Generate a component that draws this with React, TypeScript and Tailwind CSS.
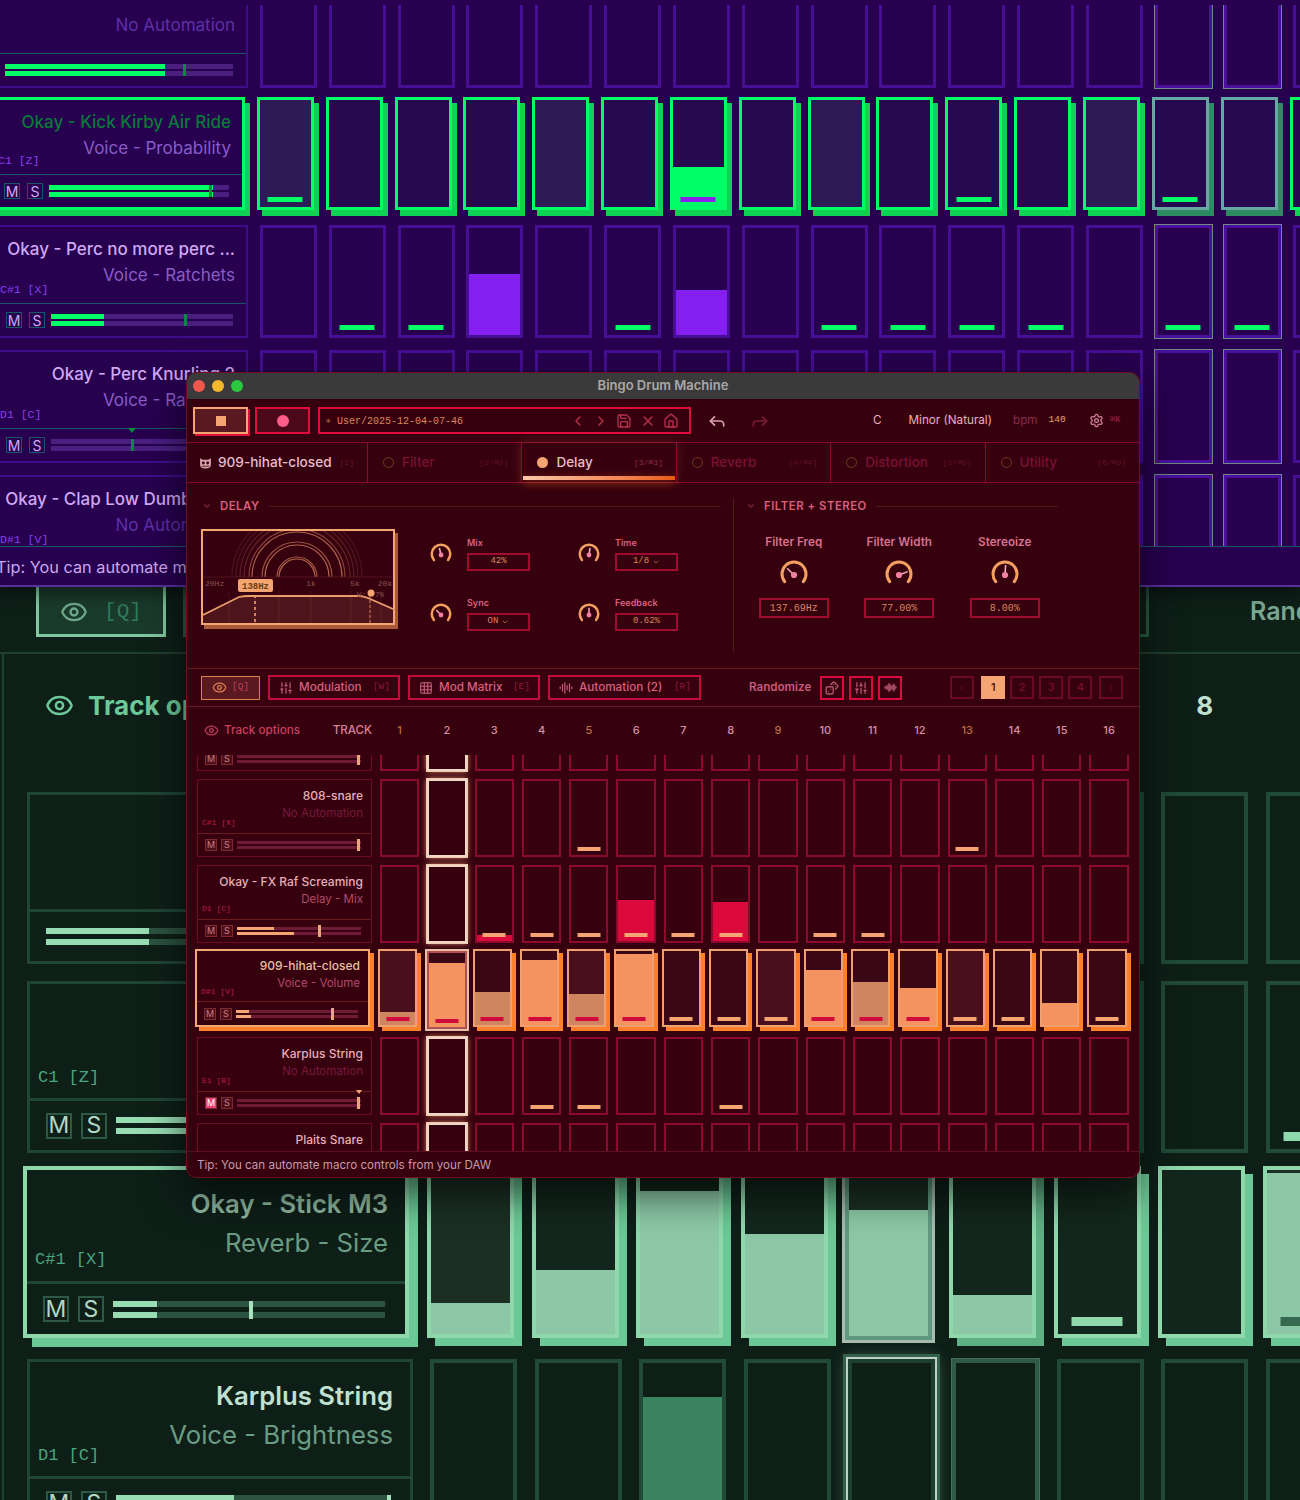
import {
  AudioLines,
  ChevronDown,
  ChevronLeft,
  ChevronRight,
  Dices,
  Eye,
  Forward,
  Grid3x3,
  House,
  Reply,
  Save,
  Settings,
  SlidersVertical,
  X,
} from "lucide-react"
import type { ReactNode } from "react"

const INTER = "font-['Inter',sans-serif]"
const MONO = "font-['Liberation_Mono',monospace]"

type Step = { bar?: boolean; fill?: number; dim?: boolean }
type Row = {
  name?: string
  sub: string
  subOff?: boolean
  keyLabel?: string
  on?: boolean
  noButtons?: boolean
  muted?: boolean
  a?: number
  b?: number
  handle?: number
  pin?: boolean
  steps: Record<number, Step>
}

const purple = {
  grid: "grid grid-cols-[260px_repeat(16,57px)] auto-rows-[113px] gap-x-[11.85px] gap-y-[12px]",
  panel: "border-2 border-[#3d0d8a]",
  panelOn: "border-[3px] border-[#00ff66] -translate-x-[3px] -translate-y-[3px] shadow-[5px_6px_0_#0fd154]",
  head: "h-[77px] pt-[12px] pl-[10px] pr-[11px] border-b border-[#1c5566]",
  headOn: "h-[75px] pt-[12px] pl-[10px] pr-[11px] border-b border-[#1c5566]",
  name: "text-[17px] leading-[20px] font-medium",
  nameCol: "text-[#d0a8f4]",
  nameOnCol: "text-[#0a7a3a]",
  sub: "text-[17px] leading-[20px] mt-[6px]",
  subCol: "text-[#8a5cc8]",
  subOffCol: "text-[#5f2fa8]",
  key: `${MONO} text-[11.5px] leading-[14px] -mt-[2px] text-[#8a3ff0]`,
  keyOn: `${MONO} text-[11.5px] leading-[14px] -mt-[4px] text-[#8a3ff0]`,
  foot: "pl-[16px] pr-[13px] gap-[7px]",
  btn: "w-[16px] h-[16px] border border-[#1c5566] text-[14px]",
  btnCol: "text-[#d0a8f4]",
  btnOn: "bg-[#f0407a] text-white",
  track: "h-[5px] bg-[#4a1f80]",
  tracks: "gap-[2px] ml-[-1px]",
  trackFill: "bg-[#00ff66]",
  handle: "w-[3px] h-[12px] top-0 bg-[#0a8a3e]",
  pin: "border-x-[4px] border-t-[5px] border-x-transparent border-t-[#0a8a3e] -top-[11px] -ml-[3px]",
  step: "border-[3px] border-[#460f96]",
  stepOn: "border-[3px] border-[#00ff66] -translate-x-[3px] -translate-y-[3px] shadow-[5px_6px_0_#0fd154]",
  play: "border-[3px] border-[#4a0f9e] shadow-[0_0_0_1px_#6f8a86]",
  playOn: "border-[3px] border-[#66a8a4] -translate-x-[3px] -translate-y-[3px] shadow-[5px_6px_0_#2f8a62]",
  ghost: "border-[3px] border-[#460f96]",
  ghostOn: "border-[3px] border-[#00ff66]",
  beat: "bg-[#2e1a54]",
  rest: "bg-[#27094f]",
  fill: "bg-[#851ff0]",
  fillOn: "bg-[#00ff66]",
  fillDim: "bg-[#00ff66]",
  bar: "w-[35px] h-[5px] bottom-[5px]",
  barCol: "bg-[#00ff66]",
  barOnFill: "bg-[#8a1ff0]",
  playCols: [13, 14],
  ghostCols: [] as number[],
}

const green = {
  grid: "grid grid-cols-[386px_repeat(16,87px)] auto-rows-[172px] gap-x-[17.4px] gap-y-[17px]",
  panel: "border-[3px] border-[#1f4535]",
  panelOn: "border-[4px] border-[#8ed8ac] -translate-x-[4px] -translate-y-[4px] shadow-[9px_9px_0_#6cc896]",
  head: "h-[117px] pt-[20px] pl-[8px] pr-[17px] border-b-[3px] border-[#1f4535]",
  headOn: "h-[114px] pt-[20px] pl-[8px] pr-[17px] border-b-[3px] border-[#1f4535]",
  name: "text-[25.7px] leading-[28px] font-semibold",
  nameCol: "text-[#c0e0d0]",
  nameOnCol: "text-[#8fb8a0]",
  sub: "text-[25.7px] leading-[28px] mt-[11px]",
  subCol: "text-[#6a9c84]",
  subOffCol: "text-[#356a50]",
  key: `${MONO} text-[17px] leading-[20px] -mt-[3px] text-[#4aa680]`,
  keyOn: `${MONO} text-[17px] leading-[20px] -mt-[7px] text-[#4aa680]`,
  foot: "pl-[16px] pr-[20px] gap-[9px]",
  btn: "w-[26px] h-[26px] border-2 border-[#2c5a46] text-[23px]",
  btnCol: "text-[#b0d8c4]",
  btnOn: "bg-[#f0407a] text-white",
  track: "h-[6px] bg-[#2c5240]",
  tracks: "gap-[5px]",
  trackFill: "bg-[#98dcb4]",
  handle: "w-[4px] h-[18px] top-0 bg-[#a8e0c0]",
  pin: "border-x-[5px] border-t-[6px] border-x-transparent border-t-[#a8e0c0] -top-[10px] -ml-[3px]",
  step: "border-[4px] border-[#214a38]",
  stepOn: "border-[4px] border-[#8ed8ac] -translate-x-[3px] -translate-y-[4px] shadow-[8px_8px_0_#6cc896]",
  play: "border-[4px] border-[#1d3f30] shadow-[0_0_0_2px_#c0d0c8,0_0_0_5px_#34604e,0_0_14px_#5a7a68]",
  playOn: "border-[4px] border-[#5f9a80] -translate-x-[3px] -translate-y-[2px] shadow-[0_0_0_3px_#a8bcb0]",
  ghost: "border-[4px] border-[#2f5a48] shadow-[0_0_0_1px_#46705e]",
  ghostOn: "border-[4px] border-[#8ed8ac] -translate-x-[3px] -translate-y-[4px] shadow-[8px_8px_0_#5faf85]",
  beat: "bg-[#1b2f25]",
  rest: "bg-[#13261d]",
  fill: "bg-[#3a8560]",
  fillOn: "bg-[#8cc8a6]",
  fillDim: "bg-[#84bc9d]",
  bar: "w-[51px] h-[9px] bottom-[8px]",
  barCol: "bg-[#8ed8ac]",
  barOnFill: "bg-[#356a50]",
  playCols: [4],
  ghostCols: [5],
}

const red = {
  grid: "grid grid-cols-[175px_repeat(16,39.3px)] auto-rows-[78px] gap-x-[8px] gap-y-[8px]",
  panel: "border border-[#6e0a28]",
  panelOn: "border-2 border-[#f4a572] -translate-x-[2px] -translate-y-[2px] shadow-[4px_4px_0_#ff7f2a]",
  head: "h-[54px] pt-[8px] pl-[4px] pr-[8px] border-b border-[#6a1a20]",
  headOn: "h-[51px] pt-[7px] pl-[4px] pr-[8px] border-b border-[#6a1a20]",
  name: "text-[12px] leading-[16px] font-medium",
  nameCol: "text-[#e8aeb8]",
  nameOnCol: "text-[#e8c0a0]",
  sub: "text-[11.5px] leading-[14px] mt-[2px]",
  subCol: "text-[#b04a6c]",
  subOffCol: "text-[#761a3c]",
  key: `${MONO} text-[8px] leading-[8px] -mt-[1px] text-[#b81e4a]`,
  keyOn: `${MONO} text-[8px] leading-[8px] -mt-[2px] text-[#b81e4a]`,
  foot: "pl-[7px] pr-[10px] gap-[4px]",
  btn: "w-[12px] h-[12px] border border-[#7a2a30] text-[9px]",
  btnCol: "bg-[#4e1018] text-[#c87a8a]",
  btnOn: "bg-[#f0407a] text-white",
  track: "h-[3px] bg-[#701a38]",
  tracks: "gap-[2px]",
  trackFill: "bg-[#f4a572]",
  handle: "w-[3px] h-[12px] -top-[2px] bg-[#e8a878]",
  pin: "border-x-[3px] border-t-[4px] border-x-transparent border-t-[#f4a572] -top-[7px] -ml-[1.5px]",
  step: "border-2 border-[#8c0a2e]",
  stepOn: "border-2 border-[#f0a070] -translate-x-[2px] -translate-y-[2px] shadow-[4px_4px_0_#ff7f2a]",
  play: "border-2 border-[#f0d8c8] shadow-[0_0_0_1px_#f0c8b0,0_0_6px_#f0a070]",
  playOn: "border-2 border-[#b05050] shadow-[0_0_0_2px_#e8c0a8]",
  ghost: "border-2 border-[#8c0a2e]",
  ghostOn: "border-2 border-[#f0a070]",
  beat: "bg-[#4a0f1c]",
  rest: "bg-[#3a0714]",
  fill: "bg-[#dc0a3c]",
  fillOn: "bg-[#f4935f]",
  fillDim: "bg-[#cf8560]",
  bar: "w-[23px] h-[4px] bottom-[4px]",
  barCol: "bg-[#f4a572]",
  barOnFill: "bg-[#d00a3c]",
  playCols: [1],
  ghostCols: [] as number[],
}

type Theme = typeof purple

const purpleRows: Row[] = [
  { sub: "No Automation", subOff: true, noButtons: true, a: 70, b: 70, handle: 78, steps: {} },
  {
    name: "Okay - Kick Kirby Air Ride",
    sub: "Voice - Probability",
    keyLabel: "C1 [Z]",
    on: true,
    a: 91,
    b: 91,
    handle: 89,
    steps: { 0: { bar: true }, 6: { bar: true, fill: 37 }, 10: { bar: true }, 13: { bar: true } },
  },
  {
    name: "Okay - Perc no more perc ...",
    sub: "Voice - Ratchets",
    keyLabel: "C#1 [X]",
    a: 29,
    b: 29,
    handle: 73,
    steps: {
      1: { bar: true },
      2: { bar: true },
      3: { fill: 57 },
      5: { bar: true },
      6: { fill: 42 },
      8: { bar: true },
      9: { bar: true },
      10: { bar: true },
      11: { bar: true },
      13: { bar: true },
      14: { bar: true },
    },
  },
  { name: "Okay - Perc Knurling 2", sub: "Voice - Ratchets", keyLabel: "D1 [C]", handle: 44, pin: true, steps: {} },
  { name: "Okay - Clap Low Dumbles ...", sub: "No Automation", subOff: true, keyLabel: "D#1 [V]", steps: {} },
]

const greenRows: Row[] = [
  { sub: "Voice - Pan", noButtons: true, a: 30, b: 30, steps: {} },
  { name: "Clap Low", sub: "Voice - Pitch", keyLabel: "C1 [Z]", a: 40, b: 40, steps: { 8: { bar: true } } },
  {
    name: "Okay - Stick M3",
    sub: "Reverb - Size",
    keyLabel: "C#1 [X]",
    on: true,
    a: 16,
    b: 16,
    handle: 50,
    steps: {
      0: { fill: 19 },
      1: { fill: 39 },
      2: { fill: 87 },
      3: { fill: 61 },
      4: { fill: 77 },
      5: { fill: 24 },
      6: { bar: true },
      8: { fill: 98, bar: true },
    },
  },
  { name: "Karplus String", sub: "Voice - Brightness", keyLabel: "D1 [C]", a: 43, b: 43, handle: 99, steps: { 2: { fill: 79 } } },
]

const redRows: Row[] = [
  { name: "Okay - Perc", sub: "No Automation", subOff: true, keyLabel: "C1 [Z]", handle: 97, steps: {} },
  {
    name: "808-snare",
    sub: "No Automation",
    subOff: true,
    keyLabel: "C#1 [X]",
    handle: 97,
    steps: { 4: { bar: true }, 12: { bar: true } },
  },
  {
    name: "Okay - FX Raf Screaming",
    sub: "Delay - Mix",
    keyLabel: "D1 [C]",
    a: 30,
    b: 46,
    handle: 65,
    steps: {
      2: { bar: true, fill: 8 },
      3: { bar: true },
      4: { bar: true },
      5: { bar: true, fill: 55 },
      6: { bar: true },
      7: { bar: true, fill: 53 },
      9: { bar: true },
      10: { bar: true },
    },
  },
  {
    name: "909-hihat-closed",
    sub: "Voice - Volume",
    keyLabel: "D#1 [V]",
    on: true,
    a: 11,
    b: 12,
    handle: 78,
    steps: {
      0: { bar: true, fill: 17, dim: true },
      1: { bar: true, fill: 86 },
      2: { bar: true, fill: 45, dim: true },
      3: { bar: true, fill: 88 },
      4: { bar: true, fill: 42, dim: true },
      5: { bar: true, fill: 96 },
      6: { bar: true },
      7: { bar: true },
      8: { bar: true },
      9: { bar: true, fill: 75 },
      10: { bar: true, fill: 58, dim: true },
      11: { bar: true, fill: 50 },
      12: { bar: true },
      13: { bar: true },
      14: { fill: 30 },
      15: { bar: true },
    },
  },
  {
    name: "Karplus String",
    sub: "No Automation",
    subOff: true,
    keyLabel: "E1 [B]",
    muted: true,
    handle: 97,
    pin: true,
    steps: { 3: { bar: true }, 4: { bar: true }, 7: { bar: true } },
  },
  { name: "Plaits Snare", sub: "No Automation", subOff: true, keyLabel: "F1 [N]", handle: 97, steps: {} },
]

function Slider({ t, row }: { t: Theme; row: Row }) {
  return (
    <div className={`relative flex-1 flex flex-col ${t.tracks}`}>
      <div className={t.track}>
        <div className={`h-full ${t.trackFill}`} style={{ width: `${row.a ?? 0}%` }} />
      </div>
      <div className={t.track}>
        <div className={`h-full ${t.trackFill}`} style={{ width: `${row.b ?? 0}%` }} />
      </div>
      {row.handle !== undefined && (
        <div className={`absolute ${t.handle}`} style={{ left: `${row.handle}%` }}>
          {row.pin && <div className={`absolute w-0 h-0 ${t.pin}`} />}
        </div>
      )}
    </div>
  )
}

function TrackPanel({ t, row }: { t: Theme; row: Row }) {
  return (
    <div className={`relative flex flex-col h-full ${row.on ? t.panelOn : t.panel}`}>
      <div className={`flex flex-col items-end shrink-0 ${row.on ? t.headOn : t.head}`}>
        <div className={`whitespace-nowrap ${t.name} ${row.on ? t.nameOnCol : t.nameCol}`}>{row.name ?? "\u00a0"}</div>
        <div className={`whitespace-nowrap ${t.sub} ${row.subOff ? t.subOffCol : t.subCol}`}>{row.sub}</div>
        {row.keyLabel && <div className={`self-start whitespace-nowrap ${row.on ? t.keyOn : t.key}`}>{row.keyLabel}</div>}
      </div>
      <div className={`flex-1 flex items-center ${t.foot}`}>
        {!row.noButtons && (
          <>
            <div className={`shrink-0 flex items-center justify-center ${t.btn} ${row.muted ? t.btnOn : t.btnCol}`}>M</div>
            <div className={`shrink-0 flex items-center justify-center ${t.btn} ${t.btnCol}`}>S</div>
          </>
        )}
        <Slider t={t} row={row} />
      </div>
    </div>
  )
}

function StepCell({ t, row, col }: { t: Theme; row: Row; col: number }) {
  const step = row.steps[col] ?? {}
  const isPlay = t.playCols.includes(col)
  const isGhost = t.ghostCols.includes(col)
  let frame = row.on ? t.stepOn : t.step
  if (isPlay) frame = row.on ? t.playOn : t.play
  if (isGhost) frame = row.on ? t.ghostOn : t.ghost
  const ground = row.on ? (col % 4 === 0 ? t.beat : t.rest) : ""
  const fillClass = row.on ? (step.dim ? t.fillDim : t.fillOn) : t.fill
  return (
    <div className={`relative h-full flex flex-col justify-end ${frame} ${ground}`}>
      {step.fill !== undefined && <div className={fillClass} style={{ height: `${step.fill}%` }} />}
      {step.bar && (
        <div className={`absolute left-1/2 -translate-x-1/2 ${t.bar} ${row.on && step.fill ? t.barOnFill : t.barCol}`} />
      )}
    </div>
  )
}

function Rows({ t, rows }: { t: Theme; rows: Row[] }) {
  return (
    <>
      {rows.map((row, r) => (
        <div key={r} className="contents">
          <TrackPanel t={t} row={row} />
          {Array.from({ length: 16 }, (_, c) => (
            <StepCell key={c} t={t} row={row} col={c} />
          ))}
        </div>
      ))}
    </>
  )
}

function Knob({ size, stroke, angle }: { size: number; stroke: number; angle: number }) {
  const c = size / 2
  const r = c - stroke / 2 - 0.5
  const at = (deg: number, rad: number) => {
    const a = ((deg - 90) * Math.PI) / 180
    return `${c + Math.cos(a) * rad} ${c + Math.sin(a) * rad}`
  }
  return (
    <svg width={size} height={size} className="shrink-0">
      <path
        d={`M ${at(-130, r)} A ${r} ${r} 0 1 1 ${at(130, r)}`}
        fill="none"
        stroke="#f4a060"
        strokeWidth={stroke}
        strokeLinecap="round"
      />
      <path d={`M ${c} ${c + 1} L ${at(angle, r - 3)}`} stroke="#f8b0c0" strokeWidth={1.5} />
      <circle cx={c} cy={c + 1} r={size * 0.11} fill="#f080a4" />
    </svg>
  )
}

function ValueBox({ children, className }: { children: ReactNode; className: string }) {
  return (
    <div
      className={`flex items-center justify-center gap-[3px] border-2 border-[#a00c30] text-[#d8885c] ${MONO} ${className}`}
    >
      {children}
    </div>
  )
}

function DelayParam({ label, value, angle, menu }: { label: string; value: string; angle: number; menu?: boolean }) {
  return (
    <div className="flex items-center gap-[15px]">
      <Knob size={22} stroke={2.5} angle={angle} />
      <div className="flex flex-col gap-[4px] w-[63px]">
        <div className="text-[9px] leading-[12px] font-semibold text-[#d8607e]">{label}</div>
        <ValueBox className="h-[18px] text-[9px]">
          {value}
          {menu && <ChevronDown size={8} strokeWidth={2} />}
        </ValueBox>
      </div>
    </div>
  )
}

function FilterParam({ label, value, angle }: { label: string; value: string; angle: number }) {
  return (
    <div className="flex flex-col items-center">
      <div className="text-[11.7px] leading-[14px] font-semibold text-[#d8708e] whitespace-nowrap">{label}</div>
      <div className="mt-[11px]">
        <Knob size={28} stroke={3} angle={angle} />
      </div>
      <ValueBox className="w-[70px] h-[20px] mt-[10px] text-[10px]">{value}</ValueBox>
    </div>
  )
}

function SectionHeader({ title, className }: { title: string; className: string }) {
  return (
    <div className={`flex items-center h-[14px] ${className}`}>
      <ChevronDown size={10} strokeWidth={2} className="text-[#c04a68] shrink-0" />
      <span className="ml-[8px] text-[11.3px] font-semibold tracking-[0.55px] text-[#d8607e] whitespace-nowrap">{title}</span>
      <div className="flex-1 ml-[9px] h-px bg-[#5a1515]" />
    </div>
  )
}

function EqDisplay() {
  const arcs = [
    { r: 18, o: 0.7 },
    { r: 20, o: 0.6 },
    { r: 32, o: 0.7 },
    { r: 35, o: 0.55 },
    { r: 45, o: 0.65 },
    { r: 48, o: 0.45 },
    { r: 53, o: 0.25 },
    { r: 57, o: 0.2 },
    { r: 61, o: 0.16 },
    { r: 65, o: 0.12 },
  ]
  return (
    <div className="w-[194px] h-[96px] border-2 border-[#f4a572] shadow-[3px_4px_0_#a85a3a] bg-[#37000f] shrink-0">
      <svg width={190} height={92} viewBox="0 0 190 92" style={{ fontFamily: "Liberation Mono, monospace" }}>
        {arcs.map(a => (
          <path
            key={a.r}
            d={`M ${94 - a.r} 46 A ${a.r} ${a.r} 0 0 1 ${94 + a.r} 46`}
            fill="none"
            stroke="#e89468"
            strokeOpacity={a.o}
            strokeWidth={1.2}
          />
        ))}
        <line x1={0} y1={46} x2={190} y2={46} stroke="#5a1a20" strokeWidth={0.8} />
        <path d="M0 84 L36 66 Q40 65 46 65 L156 65 Q160 65 165 67 L190 78 L190 92 L0 92 Z" fill="#f4a572" fillOpacity={0.12} />
        {[26, 52, 76, 108, 148, 167, 178].map(x => (
          <line key={x} x1={x} y1={60} x2={x} y2={92} stroke="#f4a572" strokeOpacity={0.12} strokeWidth={0.8} />
        ))}
        <path d="M0 84 L36 66 Q40 65 46 65 L156 65 Q160 65 165 67 L190 78" fill="none" stroke="#ee9c6c" strokeWidth={1.8} />
        <line x1={52} y1={64} x2={52} y2={92} stroke="#ee9c6c" strokeWidth={1.6} strokeDasharray="3 3" />
        <line x1={167} y1={64} x2={167} y2={92} stroke="#ee9c6c" strokeWidth={0.8} strokeDasharray="3 2" />
        <g fontSize={8} fill="#8a5550">
          <text x={2} y={55}>20Hz</text>
          <text x={108} y={55} textAnchor="middle">1k</text>
          <text x={152} y={55} textAnchor="middle">5k</text>
          <text x={182} y={55} textAnchor="middle">20k</text>
          <text x={154} y={66} fontSize={7.5}>W: 77%</text>
        </g>
        <rect x={35} y={48} width={35} height={13} rx={2} fill="#f4a572" />
        <text x={52.5} y={57.5} textAnchor="middle" fontSize={9} fontWeight={700} fill="#6a3a10">138Hz</text>
        <circle cx={168} cy={62} r={3.5} fill="#f4a572" />
      </svg>
    </div>
  )
}

function ToolButton({ icon, label, keyHint, className }: { icon: ReactNode; label: string; keyHint: string; className: string }) {
  return (
    <div className={`flex items-center h-[25px] border-2 border-[#c40c3c] pl-[9px] pr-[8px] ${className}`}>
      <span className="text-[#c8607a]">{icon}</span>
      <span className="ml-[6px] text-[11.7px] font-medium text-[#d8607e] whitespace-nowrap">{label}</span>
      <span className={`ml-auto text-[9.5px] text-[#8a1a3a] ${MONO}`}>{keyHint}</span>
    </div>
  )
}

function BlobIcon() {
  const bars = [2, 4, 3, 6, 9, 7, 5, 3, 6, 8, 4, 2]
  return (
    <svg width={13} height={11} viewBox="0 0 13 11" className="text-[#c8607a]">
      {bars.map((h, i) => (
        <rect key={i} x={i + 0.5} y={5.5 - h / 2} width={1} height={h} fill="currentColor" />
      ))}
    </svg>
  )
}

function CatFace() {
  return (
    <svg width={13} height={12} viewBox="0 0 12 11" className="shrink-0">
      <path d="M1 1 L3.5 2.5 H8.5 L11 1 L11 7 Q11 10.5 6 10.5 Q1 10.5 1 7 Z" fill="#d8a0a8" />
      <circle cx={4} cy={5.5} r={1.3} fill="#37000f" />
      <circle cx={8} cy={5.5} r={1.3} fill="#37000f" />
      <path d="M2.5 8.5 H9.5" stroke="#37000f" strokeWidth={0.7} />
    </svg>
  )
}

function Tab({ label, hint, active }: { label: string; hint: string; active?: boolean }) {
  return (
    <div
      className={`relative flex items-center pl-[15px] pr-[13px] border-l border-[#8a0a2c] ${
        active ? "shadow-[0_0_10px_#a8503066]" : ""
      }`}
    >
      <div
        className={`w-[11px] h-[11px] rounded-full shrink-0 ${active ? "bg-[#f4a572]" : "border-[1.5px] border-[#7a3a20]"}`}
      />
      <span className={`ml-[8px] text-[13.5px] font-medium ${active ? "text-[#e8bfc8]" : "text-[#7a1035]"}`}>{label}</span>
      <span className={`ml-auto text-[8px] ${active ? "text-[#8a2a40]" : "text-[#5e1028]"} ${MONO}`}>{hint}</span>
      {active && (
        <div className="absolute left-[1px] right-[1px] bottom-[2px] h-[4px] bg-gradient-to-r from-[#f8c8a8] to-[#e85a10] shadow-[0_2px_8px_#e85a1088]" />
      )}
    </div>
  )
}

function PageButton({ children, active }: { children: ReactNode; active?: boolean }) {
  return (
    <div
      className={`w-[24px] h-[23px] flex items-center justify-center text-[11px] font-medium ${
        active ? "bg-[#f4a572] text-[#3a0a10]" : "border-2 border-[#6a0a25] text-[#7a0c2c]"
      }`}
    >
      {children}
    </div>
  )
}

function RedWindow() {
  const iconCls = "text-[#b8304f]"
  return (
    <div
      className={`absolute left-[186px] top-[372px] w-[954px] h-[806px] flex flex-col rounded-[10px] overflow-hidden border border-[#6a1020] bg-[#37000f] shadow-[0_16px_40px_#000000a0] ${INTER}`}
    >
      {/* title bar */}
      <div className="relative shrink-0 h-[26px] flex items-center bg-[#3a3a3a] pl-[6px] gap-[7px]">
        <div className="w-[12px] h-[12px] rounded-full bg-[#f0584e]" />
        <div className="w-[12px] h-[12px] rounded-full bg-[#f4b82e]" />
        <div className="w-[12px] h-[12px] rounded-full bg-[#2ec840]" />
        <div className="absolute inset-0 flex items-center justify-center text-[13px] font-semibold text-[#a8a8a8]">
          Bingo Drum Machine
        </div>
      </div>

      {/* transport */}
      <div className="shrink-0 h-[44px] flex items-center pl-[6px] border-b border-[#8a0a2c]">
        <div className="w-[55px] h-[27px] flex items-center justify-center border-2 border-[#f4a572] bg-[#5a1820] shadow-[2px_2px_0_#e00c3e]">
          <div className="w-[10px] h-[10px] bg-[#f4a572]" />
        </div>
        <div className="ml-[7px] w-[55px] h-[27px] flex items-center justify-center border-2 border-[#e00c3e] bg-[#4a0818]">
          <div className="w-[12px] h-[12px] rounded-full bg-[#ff5c8a]" />
        </div>
        <div className="ml-[8px] w-[373px] h-[27px] flex items-center border-2 border-[#e00c3e] pl-[5px] pr-[10px]">
          <span className={`pt-[1px] text-[10px] text-[#d8885c] ${MONO}`}>
            <span className="text-[#a86a50]">{"\u2217"}</span> User/2025-12-04-07-46
          </span>
          <div className="ml-auto flex items-center gap-[7.3px]">
            <ChevronLeft size={16} className={iconCls} />
            <ChevronRight size={16} className={iconCls} />
            <Save size={16} className={iconCls} />
            <X size={16} className={iconCls} />
            <House size={16} className={iconCls} />
          </div>
        </div>
        <Reply size={20} className="ml-[16px] text-[#e0a0b0]" />
        <Forward size={20} className="ml-[23px] text-[#7a1a3a]" />
        <span className="ml-[103px] text-[11.7px] text-[#e8b0bc]">C</span>
        <span className="ml-[27px] text-[11.7px] text-[#e8b0bc] whitespace-nowrap">Minor (Natural)</span>
        <span className="ml-[21px] text-[11.7px] text-[#8a2b4a]">bpm</span>
        <span className={`ml-[11px] text-[9.5px] text-[#e8a070] ${MONO}`}>140</span>
        <Settings size={15} className="ml-[23px] text-[#d8809a]" />
        <span className={`ml-[6px] text-[9px] font-bold text-[#8a1a3a] ${MONO}`}>{"\u2318K"}</span>
      </div>

      {/* tabs */}
      <div className="shrink-0 h-[40px] grid grid-cols-[180px_repeat(5,1fr)] border-b border-[#8a0a2c]">
        <div className="flex items-center pl-[12px]">
          <CatFace />
          <span className="ml-[6px] text-[13.6px] font-medium text-[#e8bfc8] whitespace-nowrap">909-hihat-closed</span>
          <span className={`ml-[8px] text-[8px] text-[#6a1530] ${MONO}`}>[1]</span>
        </div>
        <Tab label="Filter" hint={"[2/\u23182]"} />
        <Tab label="Delay" hint={"[3/\u23183]"} active />
        <Tab label="Reverb" hint={"[4/\u23184]"} />
        <Tab label="Distortion" hint={"[5/\u23185]"} />
        <Tab label="Utility" hint={"[6/\u23186]"} />
      </div>

      {/* device section */}
      <div className="shrink-0 h-[186px] flex border-b border-[#6a1a20]">
        <div className="w-[546px] shrink-0 pl-[14px] pr-[12px] pt-[16px]">
          <SectionHeader title="DELAY" className="pl-[1px]" />
          <div className="flex mt-[16px]">
            <EqDisplay />
            <div className="ml-[35px] mt-[8px] grid grid-cols-[148px_148px] auto-rows-[60px] items-start">
              <DelayParam label="Mix" value="42%" angle={-15} />
              <DelayParam label="Time" value="1/8" angle={10} menu />
              <DelayParam label="Sync" value="ON" angle={-50} menu />
              <DelayParam label="Feedback" value="0.62%" angle={0} />
            </div>
          </div>
        </div>
        <div className="flex-1 my-[15px] pt-[1px] pl-[12px] pr-[94px] border-l border-[#5a1515]">
          <SectionHeader title="FILTER + STEREO" className="" />
          <div className="-ml-[5px] mt-[22px] grid grid-cols-[105.5px_105.5px_105.5px]">
            <FilterParam label="Filter Freq" value="137.69Hz" angle={-50} />
            <FilterParam label="Filter Width" value="77.00%" angle={75} />
            <FilterParam label="Stereoize" value="8.00%" angle={4} />
          </div>
        </div>
      </div>

      {/* view toolbar */}
      <div className="shrink-0 h-[38px] flex items-center pl-[14px] border-b border-[#6a1a20]">
        <div className="w-[59px] h-[24px] flex items-center justify-center gap-[5px] border-[1.5px] border-[#d88050] bg-[#5a1820]">
          <Eye size={15} className="text-[#d88050]" />
          <span className={`text-[9.5px] text-[#c0405a] ${MONO}`}>[Q]</span>
        </div>
        <ToolButton
          className="ml-[8px] w-[132px]"
          icon={<SlidersVertical size={14} />}
          label="Modulation"
          keyHint="[W]"
        />
        <ToolButton className="ml-[8px] w-[132px]" icon={<Grid3x3 size={14} />} label="Mod Matrix" keyHint="[E]" />
        <ToolButton
          className="ml-[8px] w-[153px]"
          icon={<AudioLines size={14} />}
          label="Automation (2)"
          keyHint="[R]"
        />
        <span className="ml-[48px] text-[11.6px] font-semibold text-[#c85a78]">Randomize</span>
        <div className="ml-[9px] flex gap-[5px]">
          <div className="w-[24px] h-[24px] flex items-center justify-center border-2 border-[#d80c3e] text-[#c8607a]">
            <Dices size={14} />
          </div>
          <div className="w-[24px] h-[24px] flex items-center justify-center border-2 border-[#d80c3e] text-[#c8607a]">
            <SlidersVertical size={14} />
          </div>
          <div className="w-[24px] h-[24px] flex items-center justify-center border-2 border-[#d80c3e]">
            <BlobIcon />
          </div>
        </div>
        <div className="ml-[48px] flex gap-[5px]">
          <div className="mr-[2px]">
            <PageButton>
              <ChevronLeft size={10} />
            </PageButton>
          </div>
          <PageButton active>1</PageButton>
          <PageButton>2</PageButton>
          <PageButton>3</PageButton>
          <PageButton>4</PageButton>
          <div className="ml-[2px]">
            <PageButton>
              <ChevronRight size={10} />
            </PageButton>
          </div>
        </div>
      </div>

      {/* step header */}
      <div className="shrink-0 h-[48px] pl-[10px] pb-[2px] grid grid-cols-[175px_repeat(16,39.3px)] gap-x-[8px] items-center">
        <div className="flex items-center pl-[7px] mt-[2px]">
          <Eye size={15} className="text-[#b83a58]" />
          <span className="ml-[5px] text-[11.7px] font-medium text-[#c8405e] whitespace-nowrap">Track options</span>
          <span className="ml-auto text-[11.6px] font-medium text-[#d8809a]">TRACK</span>
        </div>
        {Array.from({ length: 16 }, (_, i) => (
          <div
            key={i}
            className={`text-center text-[11px] font-medium ${i % 4 === 0 ? "text-[#b87040]" : "text-[#d890a4]"}`}
          >
            {i + 1}
          </div>
        ))}
      </div>

      {/* rows */}
      <div className="flex-1 min-h-0 overflow-hidden">
        <div className={`-mt-[62px] ml-[10px] ${red.grid}`}>
          <Rows t={red} rows={redRows} />
        </div>
      </div>

      <div className="shrink-0 h-[26px] pt-[2px] flex items-center pl-[10px] border-t border-[#5a1020] text-[11.6px] text-[#c89aa8]">
        Tip: You can automate macro controls from your DAW
      </div>
    </div>
  )
}

function PurpleWindow() {
  return (
    <div
      className={`absolute left-0 top-0 w-full h-[587px] overflow-hidden bg-[#27004f] border-b-2 border-[#5a2f9a] shadow-[0_6px_16px_#00000080] ${INTER}`}
    >
      <div className="mt-[5px] h-[541px] overflow-hidden">
        <div className={`-mt-[30px] -ml-[12px] ${purple.grid}`}>
          <Rows t={purple} rows={purpleRows} />
        </div>
      </div>
      <div className="h-[39px] pt-[2px] flex items-center border-t border-[#1c5566] -ml-[4px] text-[16.3px] text-[#cba8f0] whitespace-nowrap">
        Tip: You can automate macro controls from your DAW
      </div>
    </div>
  )
}

function GreenWindow() {
  return (
    <div className={`absolute left-0 top-[587px] w-full h-[913px] overflow-hidden bg-[#0e1f18] ${INTER}`}>
      <div className="h-[71px] -mt-[4px] flex items-start pl-[36px] border-b-[2px] border-[#1f3f30]">
        <div className="shrink-0 w-[130px] h-[54px] pt-[4px] flex items-center justify-center gap-[16px] border-[3px] border-[#7fc8a0] bg-[#1a3a2c]">
          <Eye size={28} className="text-[#6fa88a]" />
          <span className={`text-[21px] text-[#2f7a5c] ${MONO}`}>[Q]</span>
        </div>
        <div className="shrink-0 ml-[17px] w-[966px] h-[54px] border-[3px] border-[#2c5a46]" />
        <span className="shrink-0 ml-[101px] mt-[10px] text-[25px] font-semibold text-[#7aa890] whitespace-nowrap">
          Randomize
        </span>
      </div>
      <div className="ml-[2px] border-l-2 border-[#1f3f30] pl-[23px]">
        <div className="h-[138px] grid grid-cols-[386px_repeat(16,87px)] grid-rows-[102px] gap-x-[17.4px] items-center">
          <div className="flex items-center pl-[18px]">
            <Eye size={29} className="text-[#6dc89a]" />
            <span className="ml-[14px] text-[26px] font-bold text-[#6dc89a] whitespace-nowrap">Track options</span>
          </div>
          {Array.from({ length: 16 }, (_, i) => (
            <div key={i} className="text-center text-[26px] font-bold text-[#c0e0d0]">
              {i + 1}
            </div>
          ))}
        </div>
        <div className={green.grid}>
          <Rows t={green} rows={greenRows} />
        </div>
      </div>
    </div>
  )
}

export default function App() {
  return (
    <div className="relative w-[1300px] h-[1500px] overflow-hidden bg-[#0e1f18]">
      <GreenWindow />
      <PurpleWindow />
      <RedWindow />
    </div>
  )
}
